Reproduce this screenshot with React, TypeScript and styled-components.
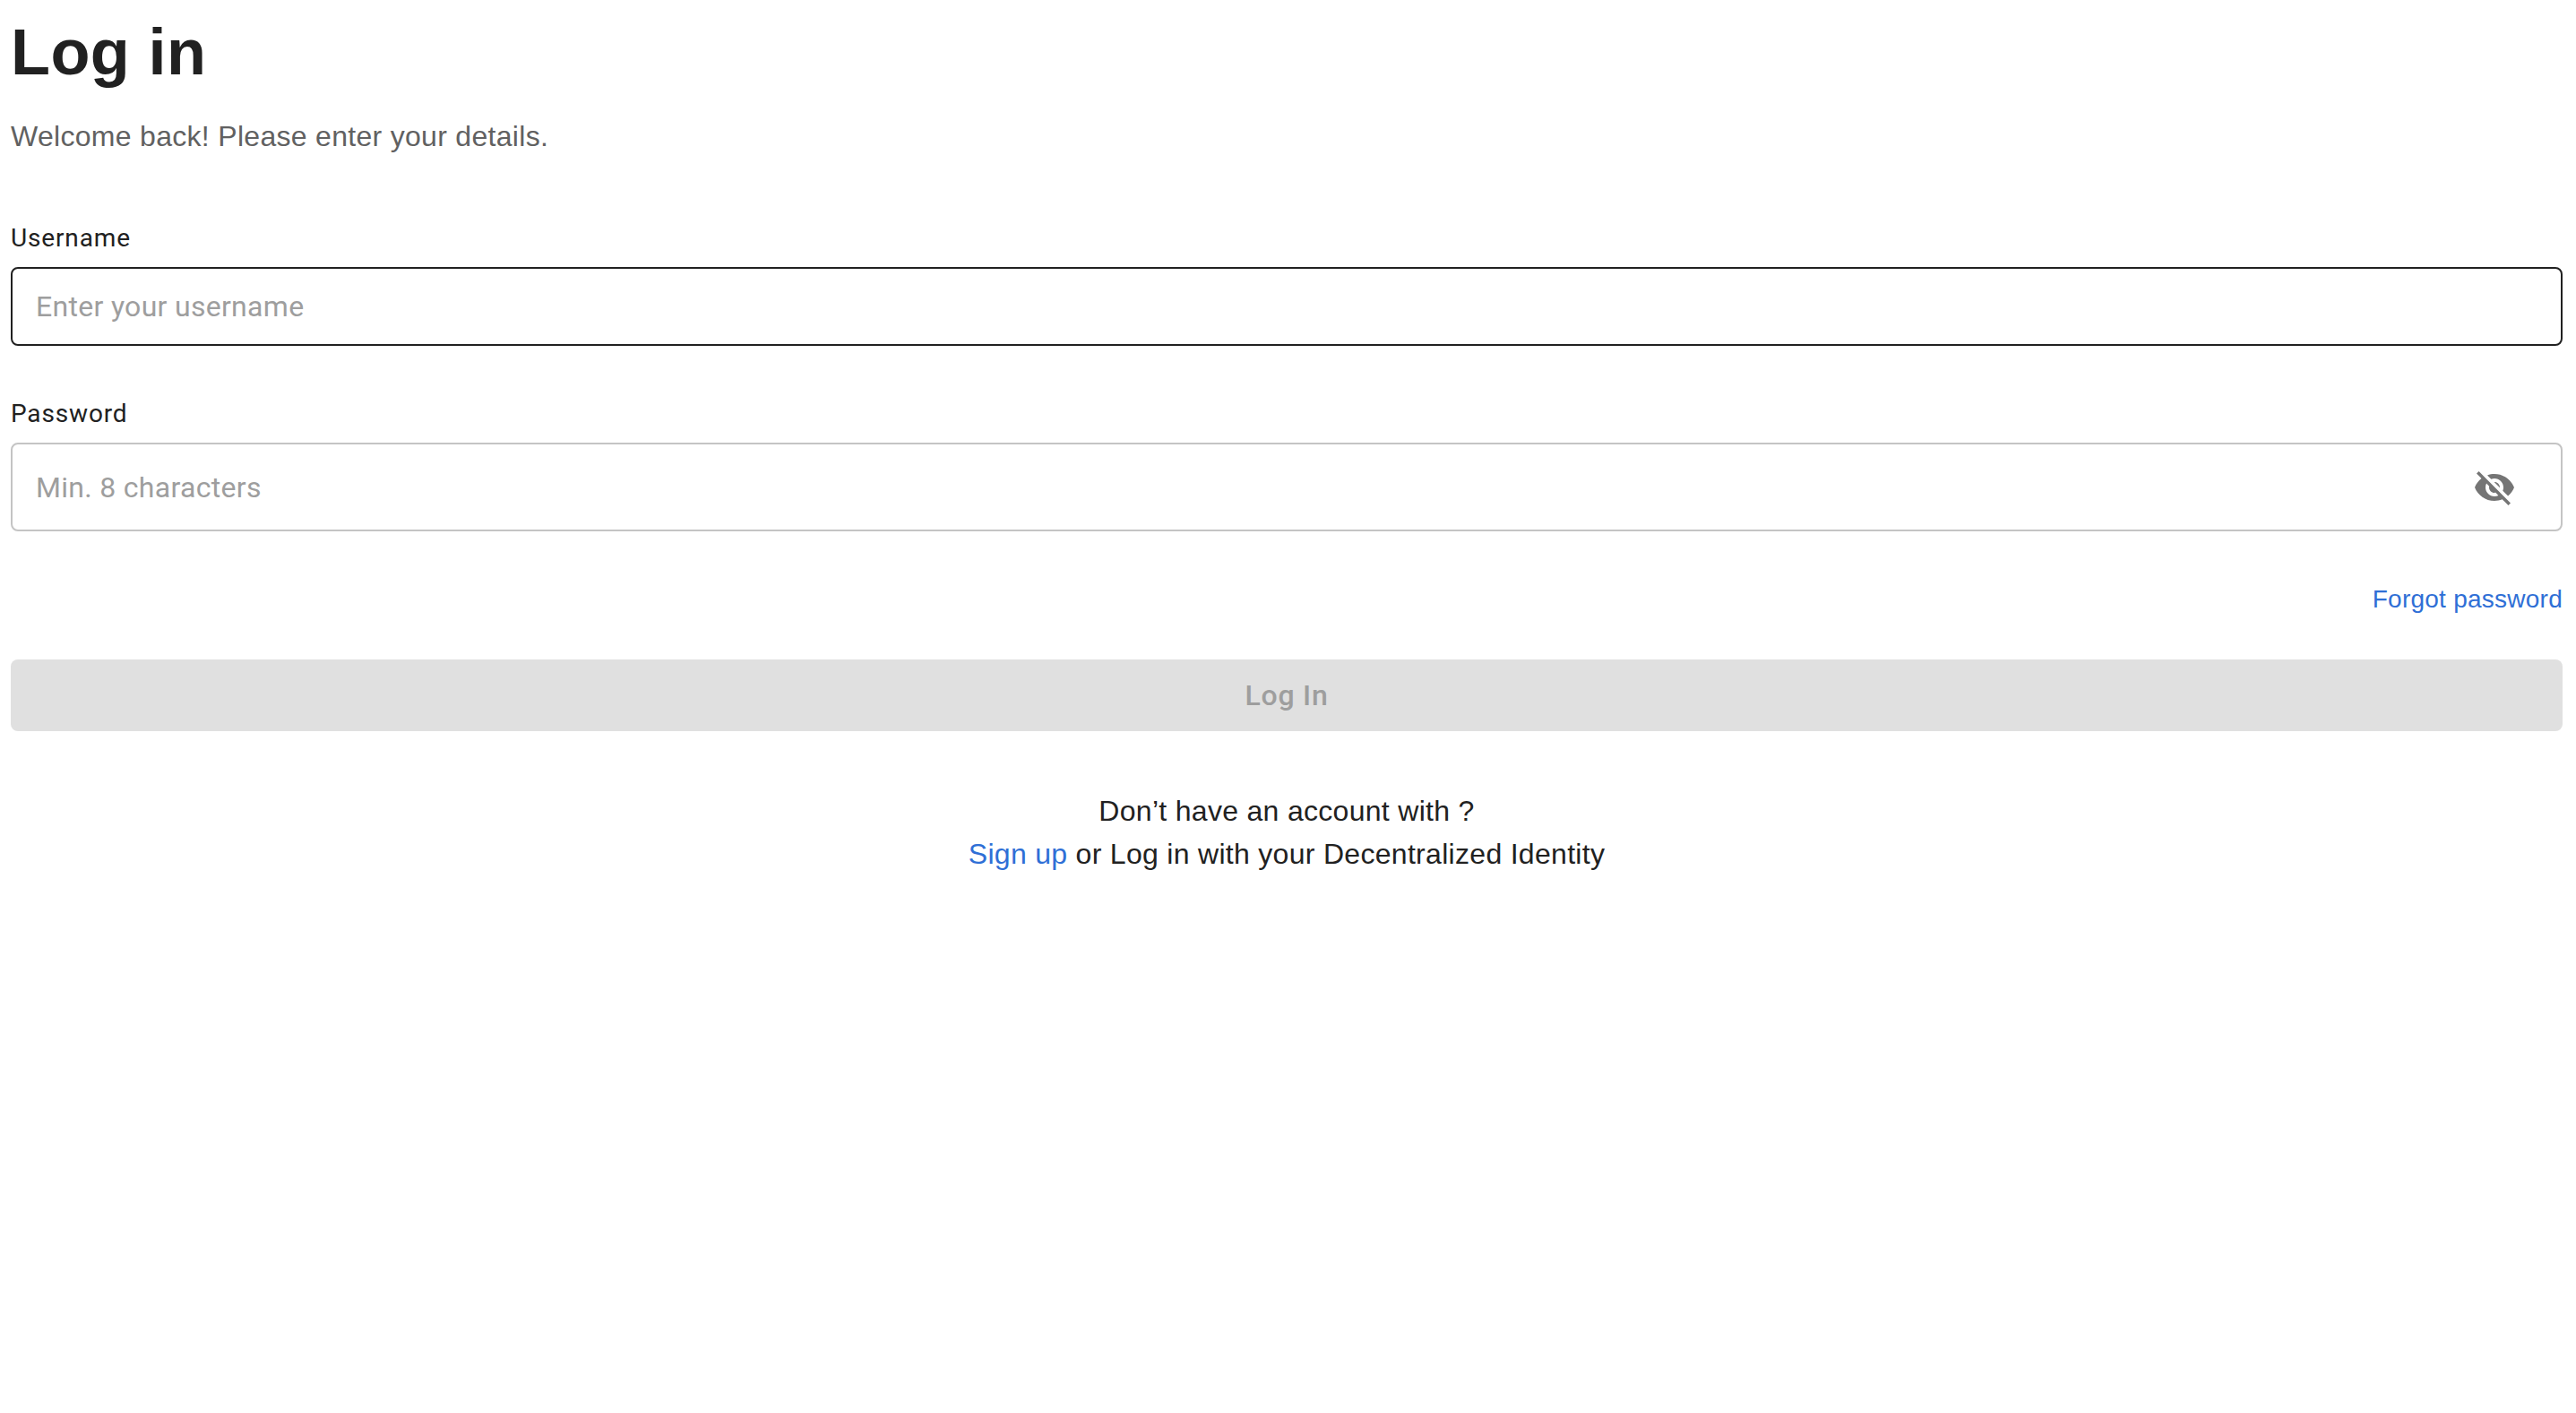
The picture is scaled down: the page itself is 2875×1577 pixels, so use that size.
import React from "react";
import styled, { createGlobalStyle } from "styled-components";

const Global = createGlobalStyle`
  html, body { margin: 0; padding: 0; background: #fff; }
  * { box-sizing: border-box; }
`;

const Page = styled.main`
  display: flex;
  flex-direction: column;
  padding: 16px 15px 0 12px;
  font-family: "Liberation Sans", Arial, sans-serif;
`;

const Title = styled.h1`
  margin: 0;
  font-size: 72px;
  line-height: 84px;
  font-weight: 700;
  letter-spacing: 0.4px;
  color: #212121;
`;

const Subtitle = styled.p`
  margin: 28px 0 0;
  font-size: 32px;
  line-height: 48px;
  letter-spacing: 0.3px;
  color: #616161;
`;

const Field = styled.div<{ $top: number }>`
  display: flex;
  flex-direction: column;
  margin-top: ${(p) => p.$top}px;
`;

const Label = styled.label`
  font-family: Roboto, sans-serif;
  font-size: 28px;
  line-height: 36px;
  letter-spacing: 0.85px;
  color: #212121;
  margin-bottom: 14px;
`;

const InputBox = styled.div<{ $focused?: boolean; $height: number }>`
  display: flex;
  align-items: center;
  height: ${(p) => p.$height}px;
  padding: 0 50px 0 26px;
  border: 2px solid ${(p) => (p.$focused ? "#212121" : "#c4c4c4")};
  border-radius: 8px;
`;

const Input = styled.input`
  flex: 1;
  border: 0;
  outline: 0;
  padding: 0;
  background: transparent;
  font-family: Roboto, sans-serif;
  font-size: 32px;
  letter-spacing: 0.3px;
  color: #212121;
  &::placeholder { color: #9e9e9e; opacity: 1; }
`;

const EyeIcon = styled.svg`
  width: 48px;
  height: 48px;
  fill: #757575;
  flex: none;
`;

const ForgotRow = styled.div`
  display: flex;
  justify-content: flex-end;
  margin-top: 56px;
`;

const Link = styled.a`
  color: #2f6fd6;
  text-decoration: none;
`;

const ForgotLink = styled(Link)`
  font-size: 28px;
  line-height: 40px;
  letter-spacing: 0.25px;
`;

const SubmitButton = styled.button`
  height: 80px;
  margin-top: 47px;
  border: 0;
  border-radius: 8px;
  background: #e0e0e0;
  color: #9e9e9e;
  font-family: Roboto, sans-serif;
  font-size: 32px;
  font-weight: 500;
  letter-spacing: 0.8px;
`;

const Footer = styled.div`
  margin-top: 65px;
  text-align: center;
  font-size: 32px;
  line-height: 48px;
  letter-spacing: 0.3px;
  color: #212121;
`;

export default function App() {
  return (
    <Page>
      <Global />
      <Title>Log in</Title>
      <Subtitle>Welcome back! Please enter your details.</Subtitle>
      <Field $top={72}>
        <Label>Username</Label>
        <InputBox $focused $height={88}>
          <Input placeholder="Enter your username" />
        </InputBox>
      </Field>
      <Field $top={58}>
        <Label>Password</Label>
        <InputBox $height={99}>
          <Input type="password" placeholder="Min. 8 characters" />
          <EyeIcon viewBox="0 0 24 24">
            <path d="M12 7c2.76 0 5 2.24 5 5 0 .65-.13 1.26-.36 1.83l2.92 2.92c1.51-1.26 2.7-2.89 3.43-4.75-1.73-4.39-6-7.5-11-7.5-1.4 0-2.74.25-3.98.7l2.16 2.16C10.74 7.13 11.35 7 12 7zM2 4.27l2.28 2.28.46.46C3.08 8.3 1.78 10.02 1 12c1.73 4.39 6 7.5 11 7.5 1.55 0 3.03-.3 4.38-.84l.42.42L19.73 22 21 20.73 3.27 3 2 4.27zM7.53 9.8l1.55 1.55c-.05.21-.08.43-.08.65 0 1.66 1.34 3 3 3 .22 0 .44-.03.65-.08l1.55 1.55c-.67.33-1.41.53-2.2.53-2.76 0-5-2.24-5-5 0-.79.2-1.53.53-2.2zm4.31-.78l3.15 3.15.02-.16c0-1.66-1.34-3-3-3l-.17.01z" />
          </EyeIcon>
        </InputBox>
      </Field>
      <ForgotRow>
        <ForgotLink href="#">Forgot password</ForgotLink>
      </ForgotRow>
      <SubmitButton disabled>Log In</SubmitButton>
      <Footer>
        Don’t have an account with ?
        <br />
        <Link href="#">Sign up</Link> or Log in with your Decentralized Identity
      </Footer>
    </Page>
  );
}
